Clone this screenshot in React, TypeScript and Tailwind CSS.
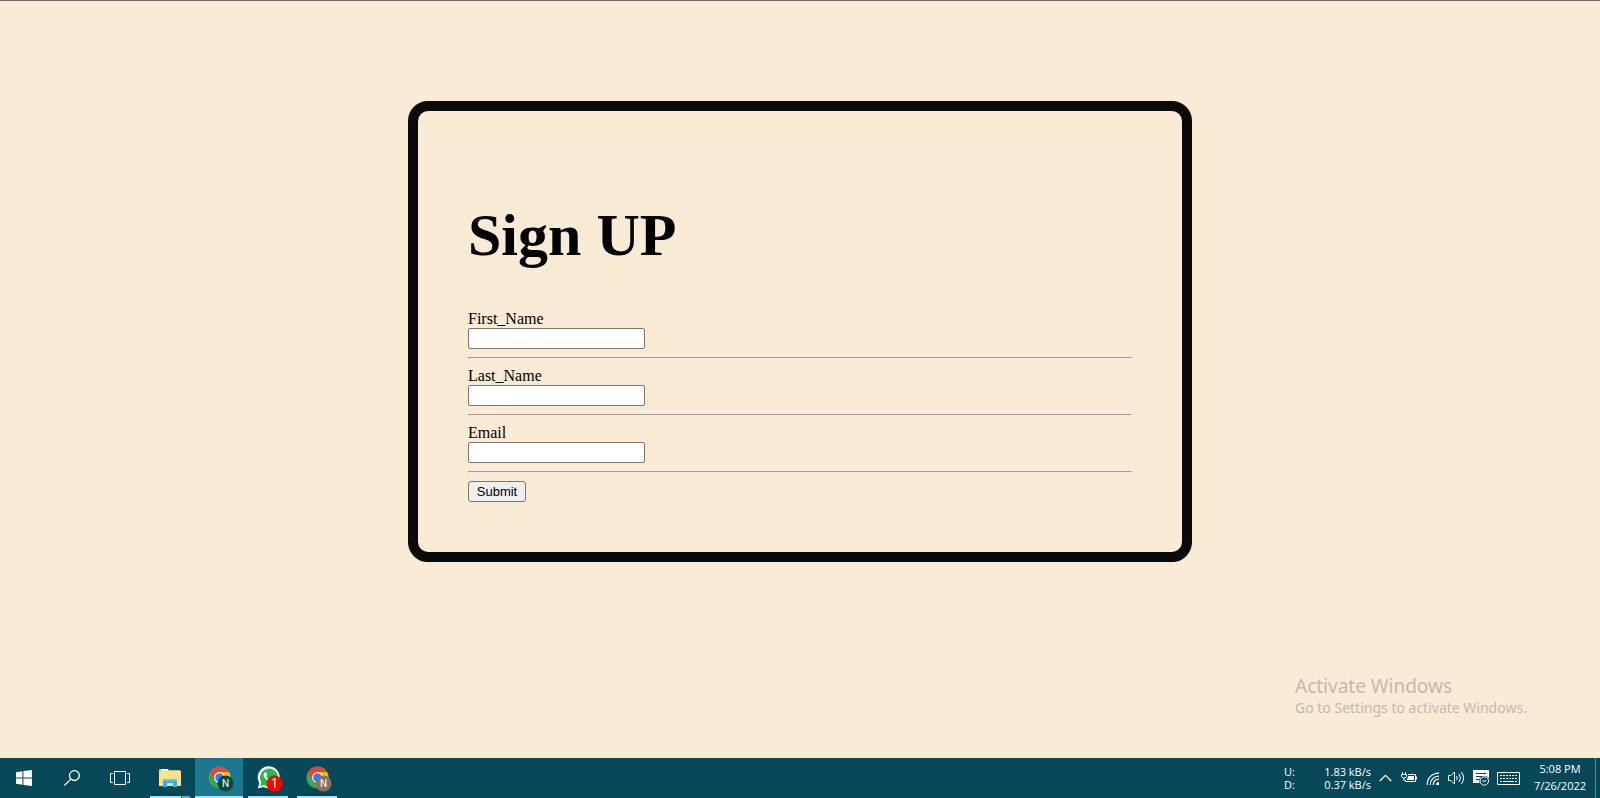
import type { ReactNode } from "react";

function Field({ id, label, type = "text" }: { id: string; label: string; type?: string }) {
  return (
    <div>
      <label htmlFor={id} className="block h-[18px] leading-[18px]">
        {label}
      </label>
      <input
        id={id}
        name={id}
        type={type}
        className="block h-[21px] w-[177px] rounded-[2px] border border-[#767676] bg-white px-0.5 font-['Liberation_Sans',sans-serif] text-[13px]"
      />
      <hr className="my-2 h-0.5 border border-t-[#9a9a9a] border-r-[#eeeeee] border-b-[#eeeeee] border-l-[#9a9a9a]" />
    </div>
  );
}

function TaskButton({ label, className = "w-12", children }: { label: string; className?: string; children: ReactNode }) {
  return (
    <button type="button" aria-label={label} className={`flex h-10 items-center justify-center ${className}`}>
      {children}
    </button>
  );
}

function Chrome({ badge }: { badge: string }) {
  return (
    <svg width="26" height="26" viewBox="0 0 26 26">
      <circle cx="11.5" cy="11.5" r="11" fill="#34a853" />
      <path d="M2 6A11 11 0 0 1 21 6L11.5 6 6.7 14.2Z" fill="#ea4335" />
      <path d="M11.5 6H21A11 11 0 0 1 11.5 22.5L16.3 14.2Z" fill="#fbbc05" />
      <circle cx="11.5" cy="11.5" r="5.4" fill="#fff" />
      <circle cx="11.5" cy="11.5" r="4.3" fill="#2f80ed" />
      <circle cx="17.5" cy="17.5" r="8" fill={badge} />
      <text x="17.5" y="21.2" textAnchor="middle" fontSize="10" fontFamily="Roboto, sans-serif" fill="#fff">
        N
      </text>
    </svg>
  );
}

function Taskbar() {
  return (
    <footer className="flex h-10 shrink-0 justify-between bg-[#074858] font-['Open_Sans',sans-serif] text-white">
      <div className="flex">
        <TaskButton label="Start">
          <svg width="16" height="16" viewBox="0 0 16 16" fill="#fff">
            <path d="M0 2.3 6.4 1.2V7.4H0ZM7.4 1 16 0V7.4H7.4ZM0 8.4H6.4V14.8L0 13.8ZM7.4 8.4H16V16L7.4 15Z" />
          </svg>
        </TaskButton>
        <TaskButton label="Search">
          <svg width="16" height="16" viewBox="0 0 16 16" fill="none" stroke="#fff" strokeWidth="1.3">
            <circle cx="10.4" cy="5.6" r="4.9" />
            <path d="M6.9 9.1.4 15.6" />
          </svg>
        </TaskButton>
        <TaskButton label="Task view">
          <svg width="20" height="14" viewBox="0 0 20 14" fill="none" stroke="#fff">
            <path d="M4.5.5H15.5V13.5H4.5ZM3 2.5H.5V11.5H3M17 2.5H19.5V11.5H17" />
          </svg>
        </TaskButton>
        <TaskButton label="File Explorer" className="mr-px ml-0.5 w-12">
          <span className="flex h-10 w-10 flex-col items-center justify-between pt-[11px]">
            <svg width="22" height="18" viewBox="0 0 22 18">
              <path d="M0 0H9L10 1H21V17H0Z" fill="#e9b840" />
              <path d="M1 2H22V17H0V3Z" fill="#fce18c" />
              <path d="M2 0H9V2H2Z" fill="#fff3c4" />
              <path d="M4 18V10H18V18H14V14H8V18Z" fill="#29b6f0" />
              <path d="M4 10H18V12H4Z" fill="#55cdf8" />
            </svg>
            <span className="flex h-0.5 w-10 bg-[#a3e2fa]">
              <span className="ml-auto w-[9px] border-l border-[#2b6574] bg-[#75a8b7]" />
            </span>
          </span>
        </TaskButton>
        <TaskButton label="Google Chrome" className="w-12 border-b-2 border-[#a3e2fa] bg-[#1b768e] pt-1 pl-1">
          <Chrome badge="#06483f" />
        </TaskButton>
        <TaskButton label="WhatsApp, 1 unread" className="w-[49px] pl-px">
          <span className="flex h-10 w-10 items-center justify-center border-b-2 border-[#a3e2fa] pt-1 pl-1">
            <svg width="26" height="26" viewBox="0 0 26 26">
              <path d="M.8 22.5 2.3 17A11 11 0 1 1 6.5 21Z" fill="#fff" />
              <path d="M3.2 20.2 4.3 16.3A9 9 0 1 1 7 19.1Z" fill="#2bb741" />
              <path d="M8 6.2C6 7.1 6.3 10 8.1 12.3S13 16.8 15.5 15.8C17 15 17 13.4 16.4 13L14 11.9 12.6 13.4C11 12.8 9.8 11.5 9.2 10.2L10.2 8.9 9.3 6.5Z" fill="#fff" />
              <circle cx="17.5" cy="17.5" r="8" fill="#f00" />
              <text x="17.5" y="22.3" textAnchor="middle" fontSize="14" fontFamily="Open Sans, sans-serif" fill="#fff">
                1
              </text>
            </svg>
          </span>
        </TaskButton>
        <TaskButton label="Google Chrome, second profile" className="w-[49px] pl-px">
          <span className="flex h-10 w-10 items-center justify-center border-b-2 border-[#a3e2fa] pt-1 pl-1">
            <Chrome badge="#8d6e63" />
          </span>
        </TaskButton>
      </div>

      <div className="flex items-center">
        <dl className="mr-2 grid w-[87px] grid-cols-[auto_1fr] text-[11px] leading-[13px]">
          <dt>U:</dt>
          <dd className="text-right">1.83 kB/s</dd>
          <dt>D:</dt>
          <dd className="text-right">0.37 kB/s</dd>
        </dl>
        <div className="flex items-center gap-2">
          <svg width="13" height="8" viewBox="0 0 13 8" fill="none" stroke="#fff" strokeWidth="1.3">
            <path d="M.8 7 6.5 1.3 12.2 7" />
          </svg>
          <svg width="17" height="12" viewBox="0 0 17 12" fill="none" stroke="#fff" className="ml-px">
            <path d="M7 2.5H14.5V9.5H4.5V8M15.5 4.5V7.5M1.5 0V2.5M4.5 0V2.5M.5 2.5H5.5V4.5L4 6H2L.5 4.5ZM3 6V9" />
            <path d="M7 4H13V8H6V6.5L7 5.5Z" fill="#fff" stroke="none" />
          </svg>
          <svg width="14" height="13" viewBox="0 0 14 13" fill="none" stroke="#fff" strokeWidth="1.2">
            <path d="M1.2 13C1.2 6 6 1.1 13 1.1M4.2 13C4.2 8 8 4.1 13 4.1M7.2 13C7.2 9.5 9.5 7.1 13 7.1" />
            <path d="M10 13C10 11.2 11.2 10 13 10V13Z" fill="#fff" stroke="none" />
          </svg>
          <svg width="17" height="14" viewBox="0 0 17 14" fill="none" stroke="#fff">
            <path d="M.5 4.5H3L6.5 1V13L3 9.5H.5ZM8.5 5Q10 7 8.5 9M11 3Q14 7 11 11M13.3 1Q18 7 13.3 13" />
          </svg>
          <svg width="16" height="16" viewBox="0 0 16 16">
            <path d="M0 0H16V13H0Z" fill="#fff" />
            <path d="M3 3.5H13M3 6.5H11M3 9.5H7" stroke="#074858" />
            <circle cx="11.3" cy="11" r="5.2" fill="#074858" />
            <circle cx="11.3" cy="11" r="4.2" fill="none" stroke="#fff" />
            <path d="M9.3 11H13.3" stroke="#fff" />
          </svg>
          <svg width="23" height="13" viewBox="0 0 23 13" fill="none" stroke="#fff">
            <path d="M.5.5H22.5V12.5H.5Z" />
            <path d="M3 3.5H20M3 6.5H20" strokeDasharray="2 1" />
            <path d="M3 9.5H5M6 9.5H17M18 9.5H20" />
          </svg>
        </div>
        <time dateTime="2022-07-26T17:08" className="ml-3 block h-10 w-[56px] pt-0.5 text-center text-[11px] leading-[17px] whitespace-nowrap">
          5:08 PM
          <br />
          7/26/2022
        </time>
        <span className="ml-[7px] h-10 w-[5px] border-l border-[#5b8792]" />
      </div>
    </footer>
  );
}

export default function App() {
  return (
    <div className="flex min-h-screen flex-col border-t border-[#6b6668] bg-[#faebd7] font-['Liberation_Serif',serif] text-base text-black">
      <main className="flex flex-1 flex-col">
        <form className="mx-auto mt-[100px] w-[49%] rounded-[20px] border-10 border-[#0a0a0a] p-[50px]">
          <h1 className="my-10 text-[60px] leading-[69px] font-bold">Sign UP</h1>
          <Field id="first_name" label="First_Name" />
          <Field id="last_name" label="Last_Name" />
          <Field id="email" label="Email" type="email" />
          <button
            type="button"
            className="block h-[21px] w-[58px] rounded-[3px] border border-[#767676] bg-[#efefef] text-center font-['Liberation_Sans',sans-serif] text-[13px] leading-[19px]"
          >
            Submit
          </button>
        </form>
        <aside className="mt-auto mr-[69px] mb-10 w-[236px] self-end font-['Noto_Sans',sans-serif] whitespace-nowrap text-[#bfbab3]">
          <p className="text-[19px] leading-6">Activate Windows</p>
          <p className="text-[14px] leading-5">Go to Settings to activate Windows.</p>
        </aside>
      </main>
      <Taskbar />
    </div>
  );
}
